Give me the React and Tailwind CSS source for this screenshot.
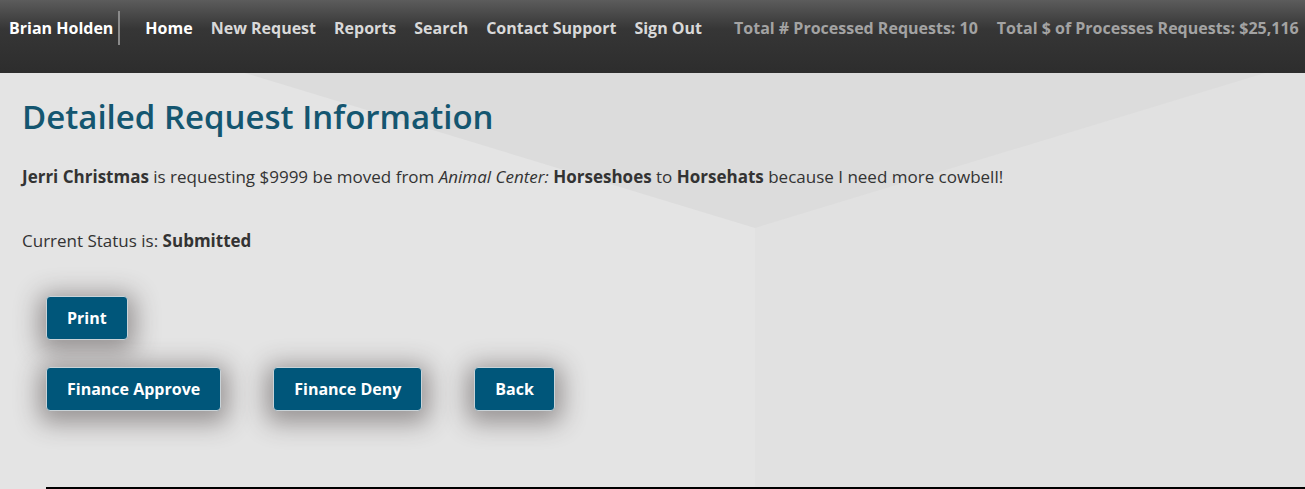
import React from 'react'

const navLinks = ['New Request', 'Reports', 'Search', 'Contact Support', 'Sign Out']

function ActionButton({ children }) {
  return (
    <button className="h-[44px] rounded-[4px] border border-[#c9d3d8] bg-[#00567a] px-[20px] text-[16px] font-bold text-white shadow-[0_5px_24px_7px_rgba(60,50,50,0.45)]">
      {children}
    </button>
  )
}

export default function App() {
  return (
    <div className="relative h-[489px] w-full overflow-hidden bg-[#e4e4e4] font-['Open_Sans',sans-serif] text-[#333]">
      {/* background decoration */}
      <svg className="absolute left-0 top-0 h-[489px] w-[1305px]" viewBox="0 0 1305 489" preserveAspectRatio="none">
        <rect x="755" y="0" width="550" height="489" fill="#e1e1e1" />
        <polygon points="245,73 1265,73 755,228" fill="#dcdcdc" />
      </svg>

      {/* header */}
      <header className="relative flex h-[73px] items-start bg-gradient-to-b from-[#5c5c5c] via-[#363636] via-40% to-[#2d2d2d] pl-[9px] pt-[11px] whitespace-nowrap">
        <div className="flex items-center">
          <span className="text-[16px] font-bold text-white">Brian Holden</span>
          <span className="ml-[5px] h-[34px] w-[2px] bg-[#8a8a8a]" />
        </div>
        <nav className="ml-[25px] flex h-[34px] items-center gap-[18px] text-[16px] font-bold">
          <a className="text-white">Home</a>
          {navLinks.map((l) => (
            <a key={l} className="text-[#d9d9d9]">{l}</a>
          ))}
        </nav>
        <div className="ml-[32px] flex h-[34px] items-center gap-[19px] text-[16px] font-bold text-[#a3a3a3]">
          <span>Total # Processed Requests: 10</span>
          <span>Total $ of Processes Requests: $25,116</span>
        </div>
      </header>

      {/* content */}
      <main className="relative px-[22px] pt-[24px]">
        <h1 className="text-[33px] font-semibold leading-[40px] text-[#145670]">Detailed Request Information</h1>
        <p className="mt-[28px] text-[17px] leading-[24px]">
          <b>Jerri Christmas</b> is requesting $9999 be moved from <i>Animal Center:</i> <b>Horseshoes</b> to <b>Horsehats</b> because I need more cowbell!
        </p>
        <p className="mt-[40px] text-[17px] leading-[24px]">
          Current Status is: <b>Submitted</b>
        </p>
        <div className="ml-[24px] mt-[43px] flex flex-col gap-[27px]">
          <div>
            <ActionButton>Print</ActionButton>
          </div>
          <div className="flex gap-[52px]">
            <ActionButton>Finance Approve</ActionButton>
            <ActionButton>Finance Deny</ActionButton>
            <ActionButton>Back</ActionButton>
          </div>
        </div>
      </main>

      <div className="absolute bottom-0 left-[46px] right-0 h-[2px] bg-black" />
    </div>
  )
}
